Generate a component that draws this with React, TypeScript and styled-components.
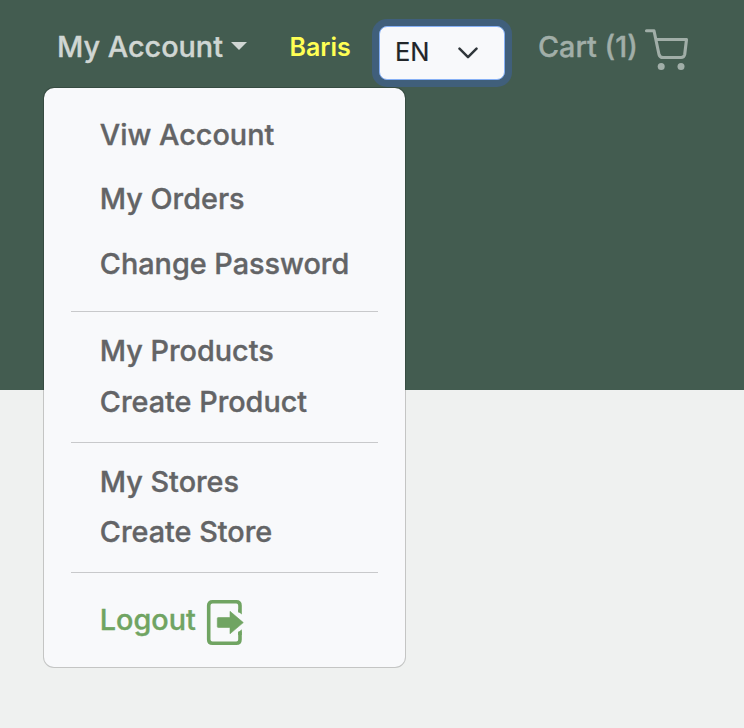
import React from "react";
import styled, { createGlobalStyle } from "styled-components";

const GlobalStyle = createGlobalStyle`
  * { box-sizing: border-box; }
  body {
    margin: 0;
    background: #eff1f0;
    font-family: Inter, "Liberation Sans", sans-serif;
    -webkit-font-smoothing: antialiased;
  }
`;

const Page = styled.div`
  height: 728px;
  position: relative;
  overflow: hidden;
`;

const Header = styled.header`
  height: 390px;
  background: #435c50;
  display: flex;
  align-items: flex-start;
`;

const AccountToggle = styled.button`
  margin: 28px 0 0 57px;
  width: 190px;
  padding: 0;
  border: 0;
  background: none;
  display: flex;
  align-items: center;
  gap: 8px;
  font: 500 28.8px/38px Inter, sans-serif;
  color: #d0d6d3;
  -webkit-text-stroke: 0.35px currentColor;
  white-space: nowrap;
`;

const Caret = styled.span`
  margin-top: -2px;
  border: 8px solid transparent;
  border-top-color: #d0d6d3;
  border-bottom: 0;
`;

const UserName = styled.span`
  margin: 28px 0 0 42.5px;
  width: 89.5px;
  font-size: 25px;
  font-weight: 600;
  line-height: 38px;
  color: #ffff54;
`;

const LanguageSelect = styled.button`
  margin-top: 26px;
  width: 126px;
  height: 54px;
  padding: 0 26px 2px 15px;
  border: 1px solid #86b0f5;
  border-radius: 8px;
  background: #f8f9fb;
  box-shadow: 0 0 0 7px #405f7b;
  display: flex;
  align-items: center;
  justify-content: space-between;
  font: 400 25.5px/38px Inter, sans-serif;
  color: #212529;
  -webkit-text-stroke: 0.2px currentColor;
`;

const Cart = styled.a`
  margin: 28px 0 0 33px;
  display: flex;
  align-items: flex-start;
  color: #a1aea8;
`;

const CartLabel = styled.span`
  width: 106px;
  font-size: 28.8px;
  font-weight: 500;
  line-height: 38px;
  -webkit-text-stroke: 0.35px currentColor;
  white-space: nowrap;
`;

const Menu = styled.nav`
  position: absolute;
  left: 43px;
  top: 87px;
  width: 363px;
  height: 581px;
  padding: 14px 27px 0;
  border: 1px solid rgba(0, 0, 0, 0.18);
  border-radius: 11px;
  background: #f8f9fb;
  background-clip: padding-box;
`;

const Item = styled.a<{ $height: number; $accent?: boolean }>`
  height: ${(p) => p.$height}px;
  padding-left: 28.8px;
  display: flex;
  align-items: center;
  gap: 10px;
  font-size: 28.8px;
  font-weight: 500;
  color: ${(p) => (p.$accent ? "#70a462" : "#636466")};
  -webkit-text-stroke: 0.35px currentColor;
  white-space: nowrap;
`;

const Divider = styled.hr<{ $before: number; $after: number }>`
  margin: ${(p) => p.$before}px 0 ${(p) => p.$after}px;
  border: 0;
  height: 1px;
  background: #c8c9cb;
`;

const LogoutGlyph = styled.svg`
  margin-top: 5px;
  flex: none;
`;

const ChevronGlyph = styled.svg`
  margin-top: 2px;
  flex: none;
`;

const ChevronIcon = () => (
  <ChevronGlyph width="20" height="12" viewBox="0 0 20 12" fill="none" stroke="#30363b" strokeWidth="2.5" strokeLinecap="round" strokeLinejoin="round">
    <path d="M1.5 1.7l8.5 8.5 8.5-8.5" />
  </ChevronGlyph>
);

const CartIcon = () => (
  <svg width="46" height="44" viewBox="0 0 46 44" fill="none" stroke="currentColor" strokeWidth="3.1" strokeLinecap="round" strokeLinejoin="round">
    <path d="M2.5 2.8H10L15 26.5Q15.8 29.5 19 29.5H37Q40 29.5 40.7 26.5L42.5 11.5H12.2" />
    <circle cx="17.2" cy="38.5" r="3.5" fill="currentColor" stroke="none" />
    <circle cx="37" cy="38.5" r="3.5" fill="currentColor" stroke="none" />
  </svg>
);

const LogoutIcon = () => (
  <LogoutGlyph width="39" height="47" viewBox="0 0 39 47" fill="none">
    <path d="M34 13.5V6.5Q34 2.8 30.3 2.8H6.5Q2.7 2.8 2.7 6.5V40.5Q2.7 44.2 6.5 44.2H30.3Q34 44.2 34 40.5V32.5" stroke="currentColor" strokeWidth="3.6" />
    <path d="M32.2 10l3.6 3.5v2l-3.6-3zM32.2 36v-2.5l3.6-3.2V36z" fill="currentColor" stroke="none" />
    <path d="M12.3 18.5H24V12.3L37.3 23.6 24 34.8V28.5H12.3q-1 0-1-1v-8q0-1 1-1z" fill="currentColor" stroke="currentColor" strokeWidth=".6" strokeLinejoin="round" />
  </LogoutGlyph>
);

export default function App() {
  return (
    <>
      <GlobalStyle />
      <Page>
        <Header>
          <AccountToggle>My Account<Caret /></AccountToggle>
          <UserName>Baris</UserName>
          <LanguageSelect>EN<ChevronIcon /></LanguageSelect>
          <Cart><CartLabel>Cart (1)</CartLabel><CartIcon /></Cart>
        </Header>
        <Menu>
          <Item $height={65}>Viw Account</Item>
          <Item $height={63}>My Orders</Item>
          <Item $height={66}>Change Password</Item>
          <Divider $before={15} $after={13} />
          <Item $height={51}>My Products</Item>
          <Item $height={51}>Create Product</Item>
          <Divider $before={15} $after={13} />
          <Item $height={51}>My Stores</Item>
          <Item $height={48}>Create Store</Item>
          <Divider $before={17} $after={13} />
          <Item $height={67} $accent>Logout<LogoutIcon /></Item>
        </Menu>
      </Page>
    </>
  );
}
